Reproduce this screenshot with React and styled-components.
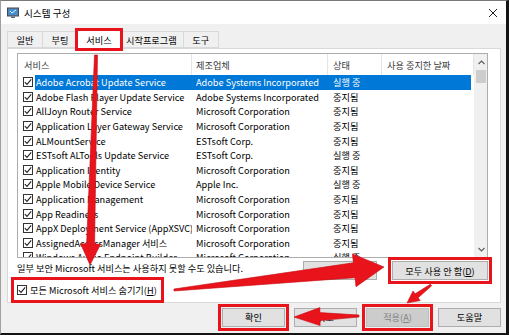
import styled, { createGlobalStyle } from "styled-components";

const GlobalStyle = createGlobalStyle`
  html, body {
    margin: 0;
    padding: 0;
    background: #ffffff;
  }
  body {
    font-family: "Noto Sans CJK KR", "Noto Sans", sans-serif;
    font-size: 9.2px;
    color: #000000;
  }
  * {
    box-sizing: border-box;
  }
`;

const Window = styled.div`
  position: relative;
  width: 509px;
  height: 335px;
  display: flex;
  flex-direction: column;
  background: #f0f0f0;
  border-top: 1px solid #7a7a7a;
  border-left: 1px solid #a0a0a0;
  border-right: 3px solid #141414;
  border-bottom: 2px solid #141414;
  overflow: hidden;
`;

const TitleBar = styled.div`
  height: 23px;
  flex-shrink: 0;
  display: flex;
  align-items: center;
  padding: 0 8px 0 6px;
  background: #ffffff;
  gap: 5px;
`;

const Title = styled.span`
  flex: 1;
  font-size: 9.6px;
  color: #000000;
`;

const TabBar = styled.div`
  height: 24px;
  flex-shrink: 0;
  display: flex;
  align-items: flex-end;
  padding-left: 6px;
  position: relative;
  z-index: 1;
`;

const Tab = styled.div`
  height: ${(props) => (props.$active ? "19px" : "17px")};
  padding: 0 ${(props) => (props.$active ? "8px" : "6px")};
  margin: 0 ${(props) => (props.$active ? "-1px" : "0")};
  margin-bottom: ${(props) => (props.$active ? "-1px" : "0")};
  display: flex;
  align-items: center;
  justify-content: center;
  min-width: ${(props) => props.$w}px;
  background: ${(props) => (props.$active ? "#ffffff" : "#f0f0f0")};
  border: 1px solid #d9d9d9;
  border-bottom: ${(props) => (props.$active ? "none" : "1px solid #d9d9d9")};
  border-left: ${(props) => (props.$first || props.$active ? "1px solid #d9d9d9" : "none")};
  outline: ${(props) => (props.$marked ? "3px solid #e8131b" : "none")};
  outline-offset: -1px;
  position: relative;
  z-index: ${(props) => (props.$active ? 2 : 1)};
`;

const Panel = styled.div`
  height: 255px;
  flex-shrink: 0;
  margin: 0 5px 0 6px;
  padding: 4px 9px 0 9px;
  background: #ffffff;
  border: 1px solid #d9d9d9;
  display: flex;
  flex-direction: column;
`;

const ListView = styled.div`
  width: 471px;
  height: 205px;
  flex-shrink: 0;
  display: flex;
  border: 1px solid #adadad;
  background: #ffffff;
  overflow: hidden;
`;

const Table = styled.div`
  width: 456px;
  display: flex;
  flex-direction: column;
`;

const HeaderRow = styled.div`
  height: 21px;
  flex-shrink: 0;
  display: grid;
  grid-template-columns: 174px 136px 54px 92px;
`;

const HeaderCell = styled.div`
  display: flex;
  align-items: center;
  padding-left: ${(props) => props.$pad}px;
  color: #3a3a3a;
  border-right: 1px solid #e5e5e5;
  white-space: nowrap;
`;

const Row = styled.div`
  height: 14.6px;
  display: grid;
  grid-template-columns: 17px 157px 136px 54px 89px;
  align-items: stretch;
  flex-shrink: 0;
`;

const Cell = styled.div`
  display: flex;
  align-items: center;
  padding-left: ${(props) => props.$pad}px;
  white-space: nowrap;
  overflow: hidden;
  background: ${(props) => (props.$selected ? "#0078d7" : "transparent")};
  color: ${(props) => (props.$selected ? "#ffffff" : "#000000")};
`;

const CheckCell = styled.div`
  display: flex;
  align-items: center;
  justify-content: flex-end;
  padding-right: 2px;
`;

const CheckBox = styled.span`
  width: 10px;
  height: 10px;
  display: inline-flex;
  align-items: center;
  justify-content: center;
  border: 1px solid #333333;
  background: #ffffff;
  flex-shrink: 0;
`;

const ScrollBar = styled.div`
  width: 13px;
  display: flex;
  flex-direction: column;
  align-items: center;
  background: #f0f0f0;
  border-left: 1px solid #f0f0f0;
`;

const ScrollArrow = styled.div`
  height: 16px;
  width: 100%;
  display: flex;
  align-items: center;
  justify-content: center;
`;

const Thumb = styled.div`
  width: 10px;
  height: 13px;
  background: #cdcdcd;
`;

const Track = styled.div`
  flex: 1;
`;

const ActionRow = styled.div`
  width: 471px;
  display: flex;
  align-items: flex-start;
  margin-top: 3px;
  gap: 15px;
`;

const Note = styled.span`
  flex: 1;
  margin-top: 0px;
  white-space: nowrap;
`;

const Button = styled.div`
  width: ${(props) => props.$w}px;
  height: 19px;
  display: flex;
  align-items: center;
  justify-content: center;
  background: ${(props) => (props.$disabled ? "#cccccc" : "#e1e1e1")};
  border: 1px solid ${(props) => (props.$disabled ? "#bfbfbf" : "#adadad")};
  color: ${(props) => (props.$disabled ? "#838383" : "#000000")};
  outline: ${(props) => (props.$marked ? "3px solid #e8131b" : "none")};
  outline-offset: 1px;
  white-space: nowrap;
  flex-shrink: 0;
`;

const HideRow = styled.label`
  align-self: flex-start;
  display: flex;
  align-items: center;
  gap: 3px;
  height: 16px;
  margin-top: 2px;
  padding: 0 2px 0 1px;
  margin-left: -1px;
  outline: ${(props) => (props.$marked ? "3px solid #e8131b" : "none")};
  outline-offset: 2px;
  white-space: nowrap;
`;

const Underline = styled.span`
  text-decoration: underline;
`;

const Footer = styled.div`
  flex: 1;
  display: flex;
  align-items: center;
  justify-content: flex-end;
  gap: 9px;
  padding: 0 5px 2px 0;
`;

const Overlay = styled.svg`
  position: absolute;
  left: -1px;
  top: -1px;
  width: 509px;
  height: 335px;
  pointer-events: none;
  z-index: 10;
`;

const services = [
  ["Adobe Acrobat Update Service", "Adobe Systems Incorporated", "실행 중"],
  ["Adobe Flash Player Update Service", "Adobe Systems Incorporated", "중지됨"],
  ["AllJoyn Router Service", "Microsoft Corporation", "중지됨"],
  ["Application Layer Gateway Service", "Microsoft Corporation", "중지됨"],
  ["ALMountService", "ESTsoft Corp.", "중지됨"],
  ["ESTsoft ALTools Update Service", "ESTsoft Corp.", "실행 중"],
  ["Application Identity", "Microsoft Corporation", "중지됨"],
  ["Apple Mobile Device Service", "Apple Inc.", "실행 중"],
  ["Application Management", "Microsoft Corporation", "중지됨"],
  ["App Readiness", "Microsoft Corporation", "중지됨"],
  ["AppX Deployment Service (AppXSVC)", "Microsoft Corporation", "중지됨"],
  ["AssignedAccessManager 서비스", "Microsoft Corporation", "중지됨"],
  ["Windows Audio Endpoint Builder", "Microsoft Corporation", "실행 중"],
];

const Check = () => (
  <svg width="8" height="8" viewBox="0 0 8 8">
    <path d="M0.8 4.2 L3 6.4 L7.2 1.4" fill="none" stroke="#222" strokeWidth="1.1" />
  </svg>
);

const AppIcon = () => (
  <svg width="12" height="12" viewBox="0 0 12 12">
    <rect x="0.5" y="1" width="11" height="8" fill="#6d7f95" stroke="#3c4a5c" />
    <rect x="1.8" y="2.2" width="8.4" height="5.6" fill="#3b8fd9" />
    <path d="M3 4 L5 6 L9 3" fill="none" stroke="#e9f2fb" strokeWidth="1" />
    <rect x="4" y="9.5" width="4" height="1.5" fill="#5a6a7e" />
  </svg>
);

const CloseIcon = () => (
  <svg width="10" height="10" viewBox="0 0 10 10">
    <path d="M1 1 L9 9 M9 1 L1 9" stroke="#222" strokeWidth="1" />
  </svg>
);

const Chevron = ({ up }) => (
  <svg width="7" height="5" viewBox="0 0 7 5">
    <path d={up ? "M0.5 4 L3.5 1 L6.5 4" : "M0.5 1 L3.5 4 L6.5 1"} fill="none" stroke="#606060" strokeWidth="1.2" />
  </svg>
);

// tapered annotation arrow from (x1,y1) to tip (x2,y2)
const arrowPoints = (x1, y1, x2, y2, w0, w1, hl, hw) => {
  const dx = x2 - x1;
  const dy = y2 - y1;
  const len = Math.hypot(dx, dy);
  const ux = dx / len;
  const uy = dy / len;
  const nx = -uy;
  const ny = ux;
  const bx = x2 - ux * hl;
  const by = y2 - uy * hl;
  const p = [
    [x1 + (nx * w0) / 2, y1 + (ny * w0) / 2],
    [bx + (nx * w1) / 2, by + (ny * w1) / 2],
    [bx + (nx * hw) / 2, by + (ny * hw) / 2],
    [x2, y2],
    [bx - (nx * hw) / 2, by - (ny * hw) / 2],
    [bx - (nx * w1) / 2, by - (ny * w1) / 2],
    [x1 - (nx * w0) / 2, y1 - (ny * w0) / 2],
  ];
  return p.map((q) => q[0].toFixed(1) + "," + q[1].toFixed(1)).join(" ");
};

const arrows = [
  [96, 55, 90, 265, 3, 8, 21, 20],
  [174, 290, 384, 267, 2, 15, 30, 33],
  [431, 285, 407, 303, 2, 5, 12, 12],
  [359, 316, 294, 317, 2, 8, 26, 18],
];

const App = () => {
  return (
    <>
      <GlobalStyle />
      <Window>
        <TitleBar>
          <AppIcon />
          <Title>시스템 구성</Title>
          <CloseIcon />
        </TitleBar>

        <TabBar>
          <Tab $first $w={36}>일반</Tab>
          <Tab $w={35}>부팅</Tab>
          <Tab $active $marked $w={44}>서비스</Tab>
          <Tab $w={62}>시작프로그램</Tab>
          <Tab $w={35}>도구</Tab>
        </TabBar>

        <Panel>
          <ListView>
            <Table>
              <HeaderRow>
                <HeaderCell $pad={6}>서비스</HeaderCell>
                <HeaderCell $pad={4}>제조업체</HeaderCell>
                <HeaderCell $pad={5}>상태</HeaderCell>
                <HeaderCell $pad={5}>사용 중지한 날짜</HeaderCell>
              </HeaderRow>
              {services.map(([name, maker, status], i) => (
                <Row key={name}>
                  <CheckCell>
                    <CheckBox>
                      <Check />
                    </CheckBox>
                  </CheckCell>
                  <Cell $pad={1} $selected={i === 0}>{name}</Cell>
                  <Cell $pad={4} $selected={i === 0}>{maker}</Cell>
                  <Cell $pad={5} $selected={i === 0}>{status}</Cell>
                  <Cell $pad={5} $selected={i === 0}></Cell>
                </Row>
              ))}
            </Table>
            <ScrollBar>
              <ScrollArrow>
                <Chevron up />
              </ScrollArrow>
              <Thumb />
              <Track />
              <ScrollArrow>
                <Chevron />
              </ScrollArrow>
            </ScrollBar>
          </ListView>

          <ActionRow>
            <Note>일부 보안 Microsoft 서비스는 사용하지 못할 수도 있습니다.</Note>
            <Button $w={74}>
              모두 사용(<Underline>E</Underline>)
            </Button>
            <Button $w={96} $marked>
              모두 사용 안 함(<Underline>D</Underline>)
            </Button>
          </ActionRow>

          <HideRow $marked>
            <CheckBox>
              <Check />
            </CheckBox>
            <span>
              모든 Microsoft 서비스 숨기기(<Underline>H</Underline>)
            </span>
          </HideRow>
        </Panel>

        <Footer>
          <Button $w={63} $marked>확인</Button>
          <Button $w={63}>취소</Button>
          <Button $w={63} $marked $disabled>
            적용(<Underline>A</Underline>)
          </Button>
          <Button $w={63}>도움말</Button>
        </Footer>

        <Overlay viewBox="0 0 509 335">
          {arrows.map((a, i) => (
            <polygon
              key={i}
              points={arrowPoints(...a)}
              fill="#e8131b"
              stroke="#c40c12"
              strokeWidth="0.6"
              strokeLinejoin="round"
            />
          ))}
        </Overlay>
      </Window>
    </>
  );
};

export default App;
